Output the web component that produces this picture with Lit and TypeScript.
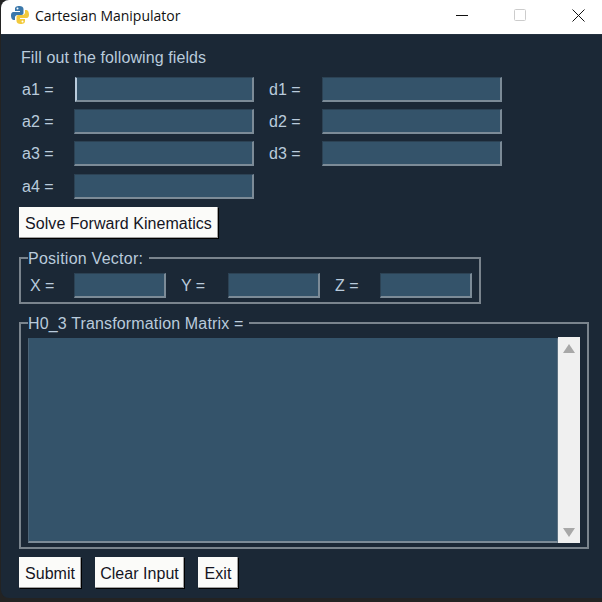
import { LitElement, html, css } from "lit";
import { customElement } from "lit/decorators.js";

@customElement("app-root")
export class AppRoot extends LitElement {
  static styles = css`
    :host { display: block; width: 602px; height: 602px; background: #232323; overflow: hidden; }
    * { box-sizing: border-box; }
    .window { margin-left: 1px; width: 601px; height: 598px; background: #1b2836; border-radius: 8px 0 0 8px; overflow: hidden;
      font-family: "Liberation Sans", Arial, sans-serif; font-size: 16px; color: #b9cbdc; }
    .title { height: 35px; background: #fff; display: flex; align-items: center; padding: 0 0 4px 9px; color: #111; border-bottom: 1px solid #24313f; }
    .title .name { font-family: "Open Sans", sans-serif; font-size: 14px; margin-left: 5px; flex: 1; white-space: nowrap; }
    .caps { display: flex; align-items: center; margin-right: -5px; }
    .cap { width: 58px; height: 30px; display: flex; align-items: center; justify-content: center; }
    .cap + .cap { margin-left: 0; }
    .body { padding: 13px 0 0 18px; }
    .intro { margin-left: 2px; height: 20px; line-height: 20px; letter-spacing: .1px; }
    .grid { margin-top: 9px; display: grid; grid-template-columns: 55px 180px 15px 53px 180px; grid-template-rows: 32px 32px 33px 25px; align-items: start; width: max-content; }
    .lbl { padding-left: 3px; white-space: nowrap; line-height: 25px; }
    .lbl2 { padding-left: 0; }
    .field { height: 25px; background: #34536a; border-style: solid; border-width: 1px 2px 2px 1px; border-color: #2c4254 #7c8b97 #7c8b97 #2c4254; }
    .caret { margin-left: 1px; border-left: 2px solid #b9cbdc; }
    .btn { display: inline-flex; align-items: center; justify-content: center; height: 31px; padding: 2px 6px 0; background: #fbfbf9; color: #15151f; white-space: nowrap;
      border: none; font: inherit; letter-spacing: .04px; box-shadow: 1px 1px 0 #000, inset -1px -1px 0 #a0a0a0; }
    .solve { margin-top: 8px; width: 199px; display: flex; }
    fieldset { margin: 0; padding: 0; border: 2px solid #7a848d; min-width: 0; }
    legend { padding: 2px 6px 0 0; margin-left: 7px; line-height: 16px; white-space: nowrap; }
    .pos { margin-top: 11px; width: 462px; height: 55px; }
    .pos legend { letter-spacing: .25px; }
    .posrow { display: flex; align-items: center; margin-top: 6px; padding-left: 9px; }
    .posrow .l { white-space: nowrap; width: 44px; }
    .posrow .y { margin-left: 15px; width: 47px; }
    .posrow .z { margin-left: 15px; width: 45px; }
    .posrow .field { width: 92px; }
    .matrix { margin-top: 10px; width: 570px; height: 235px; }
    .matrix legend { letter-spacing: .15px; }
    .mbody { display: flex; margin: 6px 0 0 7px; width: 552px; height: 205px; }
    .area { flex: 1; background: #34536a; border: 1px solid; border-color: #34536a #5d7282 #7c8b97 #4c6477; border-bottom-width: 2px; }
    .sb { width: 22px; margin-top: -1px; background: #f0f0f0; display: flex; flex-direction: column; justify-content: space-between; align-items: center; padding: 7px 0 6px; }
    .footer { margin-top: 8px; display: flex; gap: 14px; }
    .b-sub { width: 62px; }
    .b-clr { width: 89px; }
    .b-exit { width: 40px; }
  `;

  private field(caret = false) {
    return html`<div class="field ${caret ? "caret" : ""}"></div>`;
  }

  render() {
    return html`<div class="window">
      <div class="title">
        <svg width="20" height="20" viewBox="0 0 20 20">
          <path fill="#3b78ab" d="M9.500 1C6 1 5 2.300 5 4v2h5v1H3.500C1.700 7 1 8.500 1 10.500S1.800 15 3.500 15H5v-2.500C5 11 6.200 10 7.500 10h4c1.200 0 2-.9 2-2V4c0-1.800-1.800-3-4-3z"/>
          <path fill="#f2c93c" d="M10.500 19c3.500 0 4.500-1.300 4.500-3v-2h-5v-1h6.500c1.800 0 2.500-1.500 2.500-3.500S18.200 5 16.500 5H15v2.500C15 9 13.800 10 12.500 10h-4c-1.200 0-2 .9-2 2v4c0 1.800 1.800 3 4 3z"/>
          <circle cx="7.500" cy="3.500" r="1" fill="#fff"/><circle cx="12.500" cy="16.500" r="1" fill="#fff"/>
        </svg>
        <span class="name">Cartesian Manipulator</span>
        <div class="caps">
          <div class="cap"><svg width="12" height="12" viewBox="0 0 12 12"><path d="M0 6.500h12" stroke="#111" fill="none"/></svg></div>
          <div class="cap"><svg width="12" height="12" viewBox="0 0 12 12"><rect x=".5" y=".5" width="11" height="11" rx="1" fill="none" stroke="#ccc"/></svg></div>
          <div class="cap"><svg width="13" height="13" viewBox="0 0 13 13"><path d="M.5.500l12 12M12.500.500l-12 12" stroke="#111" fill="none"/></svg></div>
        </div>
      </div>
      <div class="body">
        <div class="intro">Fill out the following fields</div>
        <div class="grid">
          <span class="lbl">a1 =</span>${this.field(true)}<span></span><span class="lbl lbl2">d1 =</span>${this.field()}
          <span class="lbl">a2 =</span>${this.field()}<span></span><span class="lbl lbl2">d2 =</span>${this.field()}
          <span class="lbl">a3 =</span>${this.field()}<span></span><span class="lbl lbl2">d3 =</span>${this.field()}
          <span class="lbl">a4 =</span>${this.field()}
        </div>
        <button class="btn solve">Solve Forward Kinematics</button>
        <fieldset class="pos">
          <legend>Position Vector:</legend>
          <div class="posrow">
            <span class="l">X =</span>${this.field()}
            <span class="l y">Y =</span>${this.field()}
            <span class="l z">Z =</span>${this.field()}
          </div>
        </fieldset>
        <fieldset class="matrix">
          <legend>H0_3 Transformation Matrix =</legend>
          <div class="mbody">
            <div class="area"></div>
            <div class="sb">
              <svg width="12" height="9" viewBox="0 0 12 9"><path d="M6 0l6 9H0z" fill="#a8a8a8"/></svg>
              <svg width="12" height="9" viewBox="0 0 12 9"><path d="M6 9l6-9H0z" fill="#a8a8a8"/></svg>
            </div>
          </div>
        </fieldset>
        <div class="footer">
          <button class="btn b-sub">Submit</button>
          <button class="btn b-clr">Clear Input</button>
          <button class="btn b-exit">Exit</button>
        </div>
      </div>
    </div>`;
  }
}
